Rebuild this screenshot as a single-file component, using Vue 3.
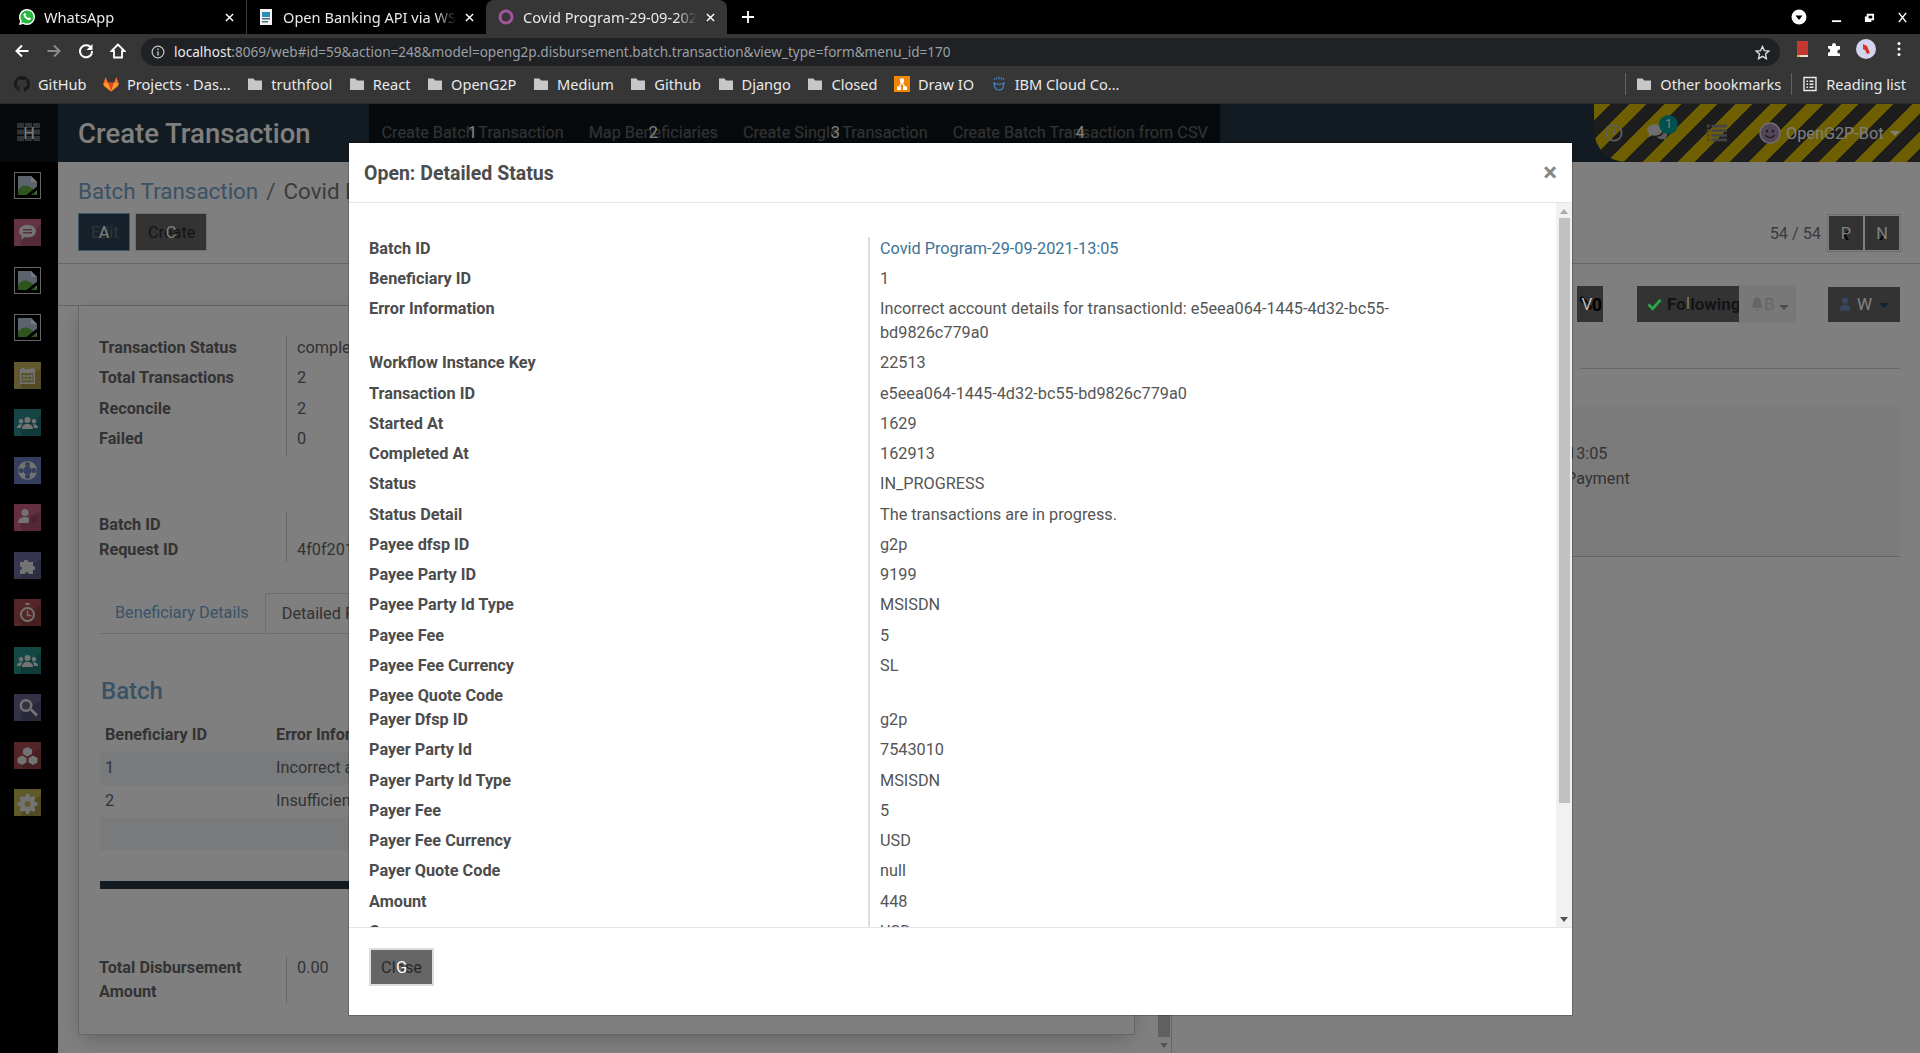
<script setup>
const url = ':8069/web#id=59&action=248&model=openg2p.disbursement.batch.transaction&view_type=form&menu_id=170'

const tabs = [
  { title: 'WhatsApp', kind: 'wa' },
  { title: 'Open Banking API via WSO2', kind: 'doc' },
  { title: 'Covid Program-29-09-2021-13:05', kind: 'ring', active: true },
]

const bookmarks = [
  { label: 'GitHub', kind: 'github' },
  { label: 'Projects · Das...', kind: 'gitlab' },
  { label: 'truthfool', kind: 'folder' },
  { label: 'React', kind: 'folder' },
  { label: 'OpenG2P', kind: 'folder' },
  { label: 'Medium', kind: 'folder' },
  { label: 'Github', kind: 'folder' },
  { label: 'Django', kind: 'folder' },
  { label: 'Closed', kind: 'folder' },
  { label: 'Draw IO', kind: 'draw' },
  { label: 'IBM Cloud Co...', kind: 'ibm' },
]

const navLinks = [
  { label: 'Create Batch Transaction', key: '1' },
  { label: 'Map Beneficiaries', key: '2' },
  { label: 'Create Single Transaction', key: '3' },
  { label: 'Create Batch Transaction from CSV', key: '4' },
]

const shade = ['M27 6 27 27 8 27 6 20z', 'rgba(0,0,0,.16)']
const light = '#e6e6e6'
const apps = [
  { broken: true },
  { bg: '#c9668c', paths: [shade, ['M13.5 6c5 0 8.5 2.700 8.500 6.200s-3.500 6.200-8.500 6.200c-1 0-1.800-.1-2.600-.3L7 21l1-4C6 15.800 5 14.200 5 12.200 5 8.700 8.500 6 13.500 6z', light], ['M9 10h9v1.400H9zM9 13h9v1.400H9z', '#b85a80']] },
  { broken: true },
  { broken: true },
  { bg: '#c4b45c', paths: [shade, ['M6 7h15v15H6z', light], ['M8 6h2v3H8zM17 6h2v3h-2z', light], ['M7.500 11h12v9.500h-12z', '#b4a650'], ['M9 13h2.500v2H9zM12.500 13H15v2h-2.500zM16 13h2.500v2H16zM9 16.500h2.500v2H9zM12.500 16.500H15v2h-2.500zM16 16.500h2.500v2H16z', light]] },
  { bg: '#2a8a88', paths: [shade, ['M13.500 8a3 3 0 1 1 0 6 3 3 0 0 1 0-6zM7 10a2.300 2.300 0 1 1 0 4.600A2.300 2.300 0 0 1 7 10zM20 10a2.300 2.300 0 1 1 0 4.600 2.300 2.300 0 0 1 0-4.600z', light], ['M8 20c0-3 2-5 5.500-5s5.500 2 5.500 5zM3 19c0-2.500 1.500-3.700 4-3.700.5 0 1 .1 1.300.2-.8 1-1.300 2.200-1.300 3.500zM24 19c0-2.500-1.500-3.700-4-3.700-.5 0-1 .1-1.300.2.800 1 1.300 2.200 1.300 3.500z', light]] },
  { bg: '#6a7cb8', paths: [['M13.500 4a9.500 9.500 0 1 1 0 19 9.500 9.500 0 0 1 0-19z', light], ['M13.500 9.500a4 4 0 1 1 0 8 4 4 0 0 1 0-8zM13.500 5a2.500 2.500 0 0 1 0 5 2.500 2.500 0 0 1 0-5zM13.500 17a2.500 2.500 0 0 1 0 5 2.500 2.500 0 0 1 0-5zM7 11a2.500 2.500 0 0 1 0 5 2.500 2.500 0 0 1 0-5zM20 11a2.500 2.500 0 0 1 0 5 2.500 2.500 0 0 1 0-5z', '#6a7cb8']] },
  { bg: '#c9607f', paths: [shade, ['M11 5a3.500 3.500 0 1 1 0 7 3.500 3.500 0 0 1 0-7zM4 19c0-4 3-6 7-6 1.500 0 2.800.3 3.800.8V19z', light], ['M16 11h8v9h-8z', '#c9607f'], ['M16.500 11.500h7.500v8h-7.500z', 'rgba(0,0,0,.25)']] },
  { bg: '#6c6ca0', paths: [shade, ['M6 10h4c-.6-3 4.600-3 4 0h5v4c3-.6 3 4.600 0 4v4h-4.500c.6-2.500-4-2.500-3.500 0H6v-4c2.500.6 2.500-4 0-3.500z', light]] },
  { bg: '#a84c50', paths: [shade, ['M13.500 8a7.500 7.500 0 1 1 0 15 7.500 7.500 0 0 1 0-15zM11.500 4h4v2h-4z', light], ['M13.500 10a5.500 5.500 0 1 1 0 11 5.500 5.500 0 0 1 0-11z', '#a84c50'], ['M12.800 11.500h1.400v4.300h3v1.400h-4.400z', light]] },
  { bg: '#269088', paths: [shade, ['M13.500 8a3 3 0 1 1 0 6 3 3 0 0 1 0-6zM7 10a2.300 2.300 0 1 1 0 4.600A2.300 2.300 0 0 1 7 10zM20 10a2.300 2.300 0 1 1 0 4.600 2.300 2.300 0 0 1 0-4.600z', light], ['M8 20c0-3 2-5 5.500-5s5.500 2 5.500 5zM3 19c0-2.500 1.500-3.700 4-3.700.5 0 1 .1 1.300.2-.8 1-1.300 2.200-1.300 3.500zM24 19c0-2.500-1.500-3.700-4-3.700-.5 0-1 .1-1.300.2.800 1 1.300 2.200 1.300 3.500z', light]] },
  { bg: '#66648e', paths: [shade, ['M12 5a6.500 6.500 0 1 1 0 13 6.500 6.500 0 0 1 0-13z', light], ['M12 7.500a4 4 0 1 1 0 8 4 4 0 0 1 0-8z', '#66648e'], ['M16 16.500l2-2 6 6-2 2z', light]] },
  { bg: '#a84a50', paths: [shade, ['M13.500 5l4.500 2.500v4.500L13.500 14.500 9 12V7.500zM8 13.500l4.500 2.500v4.500L8 23l-4.500-2.500V16zM19 13.500l4.500 2.500v4.500L19 23l-4.500-2.500V16z', light]] },
  { bg: '#c0b254', paths: [shade, ['M12 5h3l.5 2.400 1.800.8 2.100-1.300 2.100 2.100-1.300 2.100.8 1.800L23.500 13.500v3l-2.400.5-.8 1.800 1.300 2.100-2.100 2.100-2.100-1.300-1.800.8L15 25h-3l-.5-2.400-1.800-.8-2.100 1.300-2.100-2.100 1.300-2.100-.8-1.800L3.500 16.500v-3L6 13l.8-1.800-1.300-2.100 2.100-2.100 2.100 1.300 1.800-.8z', light], ['M13.500 12a3 3 0 1 1 0 6 3 3 0 0 1 0-6z', '#c0b254']] },
]

const summary = [
  ['Transaction Status', 'completed'],
  ['Total Transactions', '2'],
  ['Reconcile', '2'],
  ['Failed', '0'],
]

const rows = [
  ['Batch ID', 'Covid Program-29-09-2021-13:05', 'link'],
  ['Beneficiary ID', '1'],
  ['Error Information', 'Incorrect account details for transactionId: e5eea064-1445-4d32-bc55-bd9826c779a0'],
  ['Workflow Instance Key', '22513'],
  ['Transaction ID', 'e5eea064-1445-4d32-bc55-bd9826c779a0'],
  ['Started At', '1629'],
  ['Completed At', '162913'],
  ['Status', 'IN_PROGRESS'],
  ['Status Detail', 'The transactions are in progress.'],
  ['Payee dfsp ID', 'g2p'],
  ['Payee Party ID', '9199'],
  ['Payee Party Id Type', 'MSISDN'],
  ['Payee Fee', '5'],
  ['Payee Fee Currency', 'SL'],
  ['Payee Quote Code', ''],
  ['Payer Dfsp ID', 'g2p'],
  ['Payer Party Id', '7543010'],
  ['Payer Party Id Type', 'MSISDN'],
  ['Payer Fee', '5'],
  ['Payer Fee Currency', 'USD'],
  ['Payer Quote Code', 'null'],
  ['Amount', '448'],
  ['Currency', 'USD'],
]
</script>

<template>
  <div class="page">
    <!-- browser chrome -->
    <div class="tabstrip">
      <div v-for="tab in tabs" :key="tab.title" class="tab" :class="{ active: tab.active }">
        <svg v-if="tab.kind === 'wa'" class="fav" viewBox="0 0 16 16">
          <path d="M8 0a8 8 0 0 1 0 16c-1.400 0-2.700-.4-3.800-1L0 16l1.100-4A8 8 0 0 1 8 0z" fill="#fff" />
          <path d="M8 1.400a6.600 6.600 0 0 1 0 13.200c-1.300 0-2.400-.4-3.400-1l-2.500.7.700-2.400A6.600 6.600 0 0 1 8 1.400z" fill="#2ab540" />
          <path d="M5.800 4.200c.6-.3.800.2 1.100 1 .2.500.1.700-.3 1.200.5 1.100 1.400 2 2.700 2.600.4-.5.700-.8 1.100-.6 1.500.7 1.700.7 1.500 1.400-.3 1-1.600 1.500-2.700 1.100C7 10.200 5.300 8.500 4.600 6.400c-.3-1 .3-1.900 1.200-2.200z" fill="#fff" />
        </svg>
        <svg v-else-if="tab.kind === 'doc'" class="fav" viewBox="0 0 16 16">
          <path d="M2 0h12v16H2z" fill="#f2f2f2" />
          <path d="M4 3h8v5H4z" fill="#2b8fb8" />
          <path d="M4 9h8v1.500H4zM4 12h6v1.500H4z" fill="#4a6a80" />
        </svg>
        <svg v-else class="fav" viewBox="0 0 16 16">
          <circle cx="8" cy="8" r="6" fill="none" stroke="#a0559c" stroke-width="3" />
        </svg>
        <span class="tab-title">{{ tab.title }}</span>
        <svg class="tab-close" viewBox="0 0 10 10"><path d="M1 1l8 8M9 1l-8 8" stroke="#fff" stroke-width="1.600" /></svg>
      </div>
      <svg class="new-tab" viewBox="0 0 12 12"><path d="M6 0v12M0 6h12" stroke="#fff" stroke-width="1.800" /></svg>
      <div class="win-ctrl">
        <svg class="win-down" viewBox="0 0 16 16"><circle cx="8" cy="8" r="7.500" fill="#fff" /><path d="M4.500 6.500h7L8 11z" fill="#000" /></svg>
        <svg class="win-btn" viewBox="0 0 12 12"><path d="M1 10h10" stroke="#fff" stroke-width="2" /></svg>
        <svg class="win-btn" viewBox="0 0 12 12"><path d="M3 2h8v7H8v2H1V5h2z" fill="#fff" /><path d="M5 4h4v3H5z" fill="#000" /></svg>
        <svg class="win-btn" viewBox="0 0 12 12"><path d="M2 1l8 10M10 1L2 11" stroke="#fff" stroke-width="1.600" /></svg>
      </div>
    </div>

    <div class="toolbar">
      <svg class="tool" viewBox="0 0 16 16"><path d="M14.500 8H2.500M8 2.500L2.500 8 8 13.500" fill="none" stroke="#fff" stroke-width="2" /></svg>
      <svg class="tool" viewBox="0 0 16 16"><path d="M1.500 8h12M8 2.500L13.500 8 8 13.500" fill="none" stroke="#8a8b8d" stroke-width="2" /></svg>
      <svg class="tool" viewBox="0 0 16 16"><path d="M13.300 5.500A6 6 0 1 0 14 8" fill="none" stroke="#fff" stroke-width="2" /><path d="M14.500 1v6h-6z" fill="#fff" /></svg>
      <svg class="tool" viewBox="0 0 16 16"><path d="M8 1.500L1.500 8H4v6.500h8V8h2.500z" fill="none" stroke="#fff" stroke-width="1.800" /></svg>
      <div class="address">
        <svg class="info" viewBox="0 0 16 16"><circle cx="8" cy="8" r="6.700" fill="none" stroke="#c4c5c7" stroke-width="1.400" /><path d="M7.200 7h1.600v5H7.200zM7.200 4h1.600v1.700H7.200z" fill="#c4c5c7" /></svg>
        <span class="host">localhost</span><span class="path">{{ url }}</span>
        <svg class="star" viewBox="0 0 16 16"><path d="M8 1.500l2 4.500 4.800.5-3.600 3.200 1 4.800L8 12.100 3.800 14.500l1-4.800L1.200 6.500 6 6z" fill="none" stroke="#dfe1e4" stroke-width="1.400" /></svg>
      </div>
      <div class="extensions">
        <svg class="ext" viewBox="0 0 16 16"><path d="M3 0h11v14H3z" fill="#c5382e" /><path d="M3 14h11v2H3z" fill="#e8e0d0" /><path d="M3 14h3v2H3z" fill="#e2b52c" /></svg>
        <svg class="ext" viewBox="0 0 16 16"><path d="M2 5h4c-.5-4 4.500-4 4 0h4v3.500c-3.500-.5-3.500 4.500 0 4V15H2v-3.500c3 .5 3-4.500 0-4z" fill="#fff" /></svg>
        <svg class="ext" viewBox="0 0 20 20"><circle cx="10" cy="10" r="10" fill="#d3d5ef" /><path d="M7 5l4 2 3 7-3 1-2-4-2-1z" fill="#d8322a" /></svg>
        <svg class="ext dots" viewBox="0 0 4 16"><circle cx="2" cy="2.500" r="1.500" fill="#fff" /><circle cx="2" cy="8" r="1.500" fill="#fff" /><circle cx="2" cy="13.500" r="1.500" fill="#fff" /></svg>
      </div>
    </div>

    <div class="bookmarks">
      <div v-for="b in bookmarks" :key="b.label" class="bm">
        <svg v-if="b.kind === 'folder'" class="bm-icon" viewBox="0 0 16 16"><path d="M1 2.500h5.500l1.500 2h7V14H1z" fill="#c6c7c9" /></svg>
        <svg v-else-if="b.kind === 'github'" class="bm-icon" viewBox="0 0 16 16">
          <path d="M8 0a8 8 0 0 0-2.500 15.600c.4 0 .5-.2.5-.4v-1.400c-2.200.5-2.700-1-2.700-1-.4-.9-.9-1.200-.9-1.200-.7-.5.100-.5.100-.5.800.100 1.200.8 1.200.8.700 1.200 1.900.9 2.300.7 0-.5.300-.9.500-1.100-1.800-.2-3.600-.9-3.600-4 0-.9.300-1.600.8-2.100 0-.2-.3-1 .1-2.100 0 0 .7-.2 2.200.8a7.600 7.600 0 0 1 4 0c1.500-1 2.200-.8 2.200-.8.400 1.100.2 1.900.1 2.100.5.500.8 1.200.8 2.100 0 3.100-1.900 3.800-3.600 4 .3.300.5.700.5 1.500v2.200c0 .2.100.4.500.4A8 8 0 0 0 8 0z" fill="#17191c" />
        </svg>
        <svg v-else-if="b.kind === 'gitlab'" class="bm-icon" viewBox="0 0 16 16">
          <path d="M8 15.500L1 10.300.2 7.800 2.700 1l2.200 5.800h6.200L13.300 1l2.500 6.800-.8 2.500z" fill="#fc6d26" />
          <path d="M8 15.500L4.900 6.800h6.200z" fill="#e24329" />
          <path d="M8 15.500L.2 7.800l4.700-1zM8 15.500l7.800-7.700-4.700-1z" fill="#fca326" />
        </svg>
        <svg v-else-if="b.kind === 'draw'" class="bm-icon" viewBox="0 0 16 16">
          <path d="M0 0h16v16H0z" fill="#f08705" />
          <path d="M6 2.500h4v4H8.800l2.400 4H13v3.500H9v-3.500h.8L8 7.500l-1.800 3H7V14H3v-3.500h1.800l2.400-4H6z" fill="#fff" />
        </svg>
        <svg v-else class="bm-icon" viewBox="0 0 16 16">
          <path d="M3 7c.5 4 1 7 5 7s4.500-3 5-7c-3 1.500-7 1.500-10 0z" fill="none" stroke="#3c8ed6" stroke-width="1.200" />
          <path d="M3 2l1 2M8 .5v3M13 2l-1 2M5.500 1l.5 2.500M10.500 1L10 3.500" stroke="#3c8ed6" stroke-width="1" />
        </svg>
        <span>{{ b.label }}</span>
      </div>
      <div class="bm-right">
        <div class="bm-sep"></div>
        <div class="bm">
          <svg class="bm-icon" viewBox="0 0 16 16"><path d="M1 2.500h5.500l1.500 2h7V14H1z" fill="#c6c7c9" /></svg>
          <span>Other bookmarks</span>
        </div>
        <div class="bm-sep"></div>
        <div class="bm">
          <svg class="bm-icon" viewBox="0 0 16 16"><path d="M2 1.500h12v13H2z" fill="none" stroke="#e8eaed" stroke-width="1.400" /><path d="M4.500 4.500h1.500V6H4.500zM7.500 4.500h4V6h-4zM4.500 7.500h1.500V9H4.500zM7.500 7.500h4V9h-4zM4.500 10.500h1.500V12H4.500zM7.500 10.500h4V12h-4z" fill="#e8eaed" /></svg>
          <span>Reading list</span>
        </div>
      </div>
    </div>

    <!-- odoo app, dimmed by the modal backdrop -->
    <div class="app">
      <header class="nav">
        <div class="brand">
          <svg class="brand-grid" viewBox="0 0 23 18">
            <path d="M0 0h7v5H0zM8 0h7v5H8zM16 0h7v5h-7zM0 6.500h7v5H0zM8 6.500h7v5H8zM16 6.500h7v5h-7zM0 13h7v5H0zM8 13h7v5H8zM16 13h7v5h-7z" fill="#fff" />
          </svg>
          <span class="hk">H</span>
        </div>
        <div class="nav-title">Create Transaction</div>
        <nav class="nav-links">
          <a v-for="l in navLinks" :key="l.key" class="nav-link">{{ l.label }}<span class="hk">{{ l.key }}</span></a>
        </nav>
        <div class="ribbon">
          <svg class="rb-clock" viewBox="0 0 20 20"><circle cx="10" cy="10" r="8.500" fill="none" stroke="#bbb" stroke-width="2" /><path d="M10 5v5.500H7" fill="none" stroke="#bbb" stroke-width="2" /></svg>
          <div class="rb-chat">
            <svg viewBox="0 0 20 18"><path d="M8 1c4 0 7 2.300 7 5.300S12 11.500 8 11.500c-1 0-1.800-.1-2.600-.4L2 13l1-3C1.800 9 1 7.700 1 6.300 1 3.300 4 1 8 1z" fill="#ddd" /><path d="M16 7c2 .6 3.500 2 3.500 3.700 0 1.200-.7 2.200-1.700 3l.7 2.300-2.700-1.500c-2.300.5-5-.3-6-2 4 0 6.500-2.500 6.200-5.500z" fill="#bbb" /></svg>
            <span class="badge">1</span>
          </div>
          <svg class="rb-list" viewBox="0 0 22 20"><path d="M0 1h3v3H0zM5 1h17v3H5zM0 6h3v3H0zM5 6h17v3H5zM0 11h3v3H0zM5 11h17v3H5zM0 16h3v3H0zM5 16h17v3H5z" fill="#8a8a8a" /></svg>
          <div class="rb-user">
            <svg viewBox="0 0 22 22"><circle cx="11" cy="11" r="10" fill="#a78cb0" stroke="#ddd" stroke-width="1.500" /><circle cx="8" cy="9" r="1.200" fill="#333" /><circle cx="14" cy="9" r="1.200" fill="#333" /><path d="M6.500 13c2 3.500 7 3.500 9 0" fill="none" stroke="#333" stroke-width="1.200" /></svg>
            <span>OpenG2P-Bot</span>
            <i class="caret"></i>
          </div>
        </div>
      </header>

      <div class="app-body">
        <aside class="sidebar">
          <div v-for="(app, i) in apps" :key="i" class="app-icon" :class="{ broken: app.broken }" :style="app.bg ? { background: app.bg } : null">
            <svg v-if="app.broken" viewBox="0 0 25 25">
              <path d="M3 3h13l6 6v13H3z" fill="#b7c6d8" />
              <path d="M16 3l6 6h-6z" fill="#eef2f6" />
              <path d="M3 22v-5c4-6 10-6 16 0l3 5z" fill="#5faa3c" />
              <path d="M9 24L24 12v4L13 24z" fill="#000" />
            </svg>
            <svg v-else viewBox="0 0 27 27">
              <path v-for="(p, j) in app.paths" :key="j" :d="p[0]" :fill="p[1]" />
            </svg>
          </div>
        </aside>

        <main class="main">
          <div class="control-panel">
            <div class="cp-left">
              <div class="crumbs"><a>Batch Transaction</a><span class="crumb-sep">/</span><span>Covid Program-29-09-2021-13:05</span></div>
              <div class="cp-btns">
                <button class="btn primary">Edit<span class="hk">A</span></button>
                <button class="btn">Create<span class="hk">C</span></button>
              </div>
            </div>
            <div class="pager">
              <span>54 / 54</span>
              <div class="pager-btns">
                <button class="btn small">‹<span class="hk">P</span></button>
                <button class="btn small">›<span class="hk">N</span></button>
              </div>
            </div>
          </div>

          <div class="content">
            <div class="form-col">
              <div class="form-scroll">
                <div class="statusbar"></div>
                <div class="sheet">
                  <div class="group first">
                    <div v-for="s in summary" :key="s[0]" class="g-row">
                      <div class="g-label">{{ s[0] }}</div>
                      <div class="g-val">{{ s[1] }}</div>
                    </div>
                  </div>
                  <div class="group second">
                    <div class="g-row tight"><div class="g-label">Batch ID</div><div class="g-val"></div></div>
                    <div class="g-row tight"><div class="g-label">Request ID</div><div class="g-val">4f0f201a-8b21-4c7e</div></div>
                  </div>
                  <div class="sheet-tabs">
                    <a class="s-tab">Beneficiary Details</a>
                    <a class="s-tab on">Detailed Failures</a>
                  </div>
                  <h2 class="batch">Batch</h2>
                  <div class="b-head"><span>Beneficiary ID</span><span>Error Information</span></div>
                  <div class="b-row odd"><span>1</span><span>Incorrect account details</span></div>
                  <div class="b-row"><span>2</span><span>Insufficient funds</span></div>
                  <div class="b-row odd"></div>
                  <div class="progress"></div>
                  <div class="group third">
                    <div class="g-row">
                      <div class="g-label">Total Disbursement Amount</div>
                      <div class="g-val">0.00</div>
                    </div>
                  </div>
                </div>
              </div>
              <div class="form-bar">
                <div class="form-thumb"></div>
                <i class="arrow-down dim"></i>
              </div>
            </div>

            <aside class="chatter">
              <div class="followers">
                <button class="btn attach">
                  <svg class="clip" viewBox="0 0 16 16"><path d="M3 4l8 9c2 2 4-.5 2.500-2L6 3C4.500 1.500 2.500 3.500 4 5l6 7" fill="none" stroke="#111" stroke-width="1.800" /></svg>
                  0<span class="hk">V</span>
                </button>
                <div class="follow-group">
                  <button class="btn following">
                    <svg class="check" viewBox="0 0 16 14"><path d="M1.500 7l4.500 4.500L14.500 2" fill="none" stroke="#28a745" stroke-width="3" /></svg>
                    <b>Following</b><span class="hk">I</span>
                  </button>
                  <button class="btn bell">
                    <svg class="bell-icon" viewBox="0 0 14 16"><path d="M7 0c3 0 4.500 2.500 4.500 5.500 0 3 1 4.500 2.500 6v1H0v-1c1.500-1.500 2.500-3 2.500-6C2.500 2.500 4 0 7 0zM5 14h4a2 2 0 0 1-4 0z" fill="#666" /></svg>
                    <span>B</span><i class="caret small"></i>
                  </button>
                </div>
                <button class="btn watch">
                  <svg class="person" viewBox="0 0 14 16"><circle cx="7" cy="4" r="3.600" fill="#38485c" /><path d="M1 16c-.5-4 1-7 6-7s6.500 3 6 7z" fill="#38485c" /></svg>
                  <span class="hk hk-none">W</span><i class="caret dark"></i>
                </button>
              </div>
              <div class="chat-line"></div>
              <div class="chat-box">
                <div>Covid Program-29-09-2021-13:05</div>
                <div class="chat-pay">Payment</div>
              </div>
            </aside>
          </div>
        </main>
      </div>

      <div class="backdrop"></div>

      <section class="modal">
        <div class="modal-head">
          <h4>Open: Detailed Status</h4>
          <span class="modal-x">×</span>
        </div>
        <div class="modal-body">
          <div class="modal-scroll">
            <div v-for="r in rows" :key="r[0]" class="m-row">
              <div class="m-label">{{ r[0] }}</div>
              <div class="m-val" :class="{ link: r[2], empty: !r[1] }"><span>{{ r[1] }}</span></div>
            </div>
          </div>
          <div class="modal-bar">
            <i class="arrow-up"></i>
            <div class="modal-thumb"></div>
            <i class="arrow-down"></i>
          </div>
        </div>
        <div class="modal-foot">
          <button class="btn close">Close<span class="hk">G</span></button>
        </div>
      </section>
    </div>
  </div>
</template>

<style>
html, body {
  margin: 0;
  overflow: hidden;
  background: #000;
}
</style>

<style scoped>
.page {
  width: 1920px;
  height: 1053px;
  overflow: hidden;
  font-family: Roboto, "Liberation Sans", sans-serif;
  display: flex;
  flex-direction: column;
}

/* browser chrome */
.tabstrip {
  height: 34px;
  background: #000;
  display: flex;
  align-items: center;
  padding-left: 8px;
  color: #e8eaed;
  font-family: "Noto Sans", sans-serif;
  font-size: 14.600px;
}
.tab {
  width: 239px;
  height: 34px;
  box-sizing: border-box;
  padding: 0 11px;
  display: flex;
  align-items: center;
  gap: 9px;
  border-right: 1px solid #3c3c3c;
}
.tab.active {
  width: 241px;
  background: #363636;
  border: 0;
  border-radius: 8px 8px 0 0;
  padding-left: 12px;
}
.tab:nth-child(2) {
  border-right: 0;
}
.fav {
  width: 16px;
  height: 16px;
  flex: none;
}
.tab-title {
  flex: 1;
  overflow: hidden;
  white-space: nowrap;
  mask-image: linear-gradient(to right, #000 88%, transparent);
}
.tab-close {
  width: 9px;
  height: 9px;
  flex: none;
  margin-right: 1px;
}
.new-tab {
  width: 12px;
  height: 12px;
  margin-left: 15px;
}
.win-ctrl {
  margin-left: auto;
  display: flex;
  align-items: center;
  padding-right: 12px;
  gap: 22px;
}
.win-down {
  width: 16px;
  height: 16px;
  margin-right: 2px;
}
.win-btn {
  width: 11px;
  height: 11px;
}

.toolbar {
  height: 32px;
  background: #363636;
  display: flex;
  align-items: flex-start;
  padding-left: 14px;
}
.tool {
  width: 16px;
  height: 16px;
  margin: 9px 16px 0 0;
  flex: none;
}
.address {
  margin: 4px 0 0 -1px;
  width: 1639px;
  height: 28px;
  box-sizing: border-box;
  padding: 0 10px;
  background: #202124;
  border-radius: 14px;
  display: flex;
  align-items: center;
  font-family: "Noto Sans", sans-serif;
  font-size: 13.570px;
  white-space: nowrap;
}
.info {
  width: 14px;
  height: 14px;
  margin-right: 9px;
  flex: none;
}
.host {
  color: #e8eaed;
  margin-top: -2px;
}
.path {
  color: #9aa0a6;
  margin-top: -2px;
}
.star {
  margin-left: auto;
  width: 15px;
  height: 15px;
}
.extensions {
  display: flex;
  align-items: center;
  margin: 5px 0 0 14px;
  gap: 16px;
}
.ext {
  width: 16px;
  height: 16px;
}
.ext:nth-child(3) {
  width: 20px;
  height: 20px;
  margin: 0 0 0 -2px;
}
.ext.dots {
  width: 4px;
  margin-left: 5px;
}

.bookmarks {
  height: 35px;
  padding-bottom: 2px;
  background: #363636;
  border-bottom: 1px solid #2a2a2a;
  box-sizing: content-box;
  display: flex;
  align-items: center;
  gap: 16.500px;
  padding-left: 14px;
  color: #e8eaed;
  font-family: "Noto Sans", sans-serif;
  font-size: 14.600px;
  white-space: nowrap;
}
.bm {
  display: flex;
  align-items: center;
  gap: 8px;
}
.bm-icon {
  width: 16px;
  height: 16px;
}
.bm-right {
  margin-left: auto;
  display: flex;
  align-items: center;
  gap: 10px;
  padding-right: 14px;
}
.bm-sep {
  width: 1px;
  height: 22px;
  background: #5f6368;
}

/* odoo app */
.app {
  position: relative;
  flex: 1;
  min-height: 0;
  display: flex;
  flex-direction: column;
  background: #fff;
}
.backdrop {
  position: absolute;
  inset: 0;
  background: rgba(0, 0, 0, .5);
}
.hk {
  position: absolute;
  inset: 0;
  display: flex;
  align-items: center;
  justify-content: center;
  background: rgba(0, 0, 0, .6);
  color: #fff;
  font-family: Roboto, sans-serif;
  font-weight: 400;
  font-size: 16.250px;
}

.nav {
  height: 58px;
  flex: none;
  background: #243642;
  display: flex;
  align-items: stretch;
  color: #fff;
}
.brand {
  position: relative;
  width: 58px;
  background: #243642;
  flex: none;
}
.brand-grid {
  position: absolute;
  left: 17px;
  top: 19px;
  width: 23px;
  height: 18px;
}
.nav-title {
  width: 291px;
  padding-left: 20px;
  font-size: 27.500px;
  font-weight: 500;
  line-height: 60px;
  white-space: nowrap;
}
.nav-links {
  display: flex;
  height: 58px;
  flex: none;
}
.nav-link {
  position: relative;
  padding: 0 12.500px;
  font-size: 16.250px;
  line-height: 58px;
  white-space: nowrap;
}
.nav-link:last-child {
  padding-right: 12px;
}
.ribbon {
  margin-left: auto;
  width: 326px;
  box-sizing: border-box;
  border-bottom-left-radius: 32px;
  background: repeating-linear-gradient(135deg, #dcbe00 0, #dcbe00 12px, #3a3a3a 12px, #3a3a3a 25px);
  position: relative;
  display: flex;
  align-items: center;
  padding-left: 11px;
}
.rb-clock {
  width: 18px;
  height: 18px;
}
.rb-chat {
  position: relative;
  margin-left: 23px;
  width: 22px;
  height: 20px;
}
.rb-chat svg {
  width: 22px;
  height: 20px;
}
.badge {
  position: absolute;
  left: 13px;
  top: -8px;
  width: 19px;
  height: 19px;
  border-radius: 50%;
  background: #00a09d;
  font-size: 12px;
  line-height: 19px;
  text-align: center;
}
.rb-list {
  width: 20px;
  height: 20px;
  margin-left: 39px;
}
.rb-user {
  display: flex;
  align-items: center;
  margin-left: 32px;
  font-size: 16.250px;
  color: #fff;
  gap: 5px;
}
.rb-user svg {
  width: 22px;
  height: 22px;
}
.caret {
  display: inline-block;
  width: 0;
  height: 0;
  border: 5px solid transparent;
  border-top-color: #fff;
  border-bottom: 0;
  margin-left: 1px;
}
.caret.small {
  margin-left: 4px;
  border-top-color: #999;
}
.caret.dark {
  border-top-color: #123;
  position: relative;
  margin-left: 0;
}

.app-body {
  flex: 1;
  min-height: 0;
  display: flex;
}
.sidebar {
  width: 58px;
  flex: none;
  background: #000;
  display: flex;
  flex-direction: column;
  align-items: center;
  gap: 20.500px;
  padding-top: 9.500px;
  box-sizing: border-box;
}
.app-icon {
  width: 27px;
  height: 27px;
  flex: none;
  margin-right: 3px;
}
.app-icon svg {
  display: block;
  width: 100%;
  height: 100%;
}
.app-icon.broken {
  box-sizing: border-box;
  border: 1px solid #ccc;
  background: #000;
}

.main {
  flex: 1;
  min-width: 0;
  display: flex;
  flex-direction: column;
  color: #888;
}
.control-panel {
  height: 102px;
  flex: none;
  box-sizing: border-box;
  border-bottom: 1px solid #ccc;
  display: flex;
  justify-content: space-between;
  padding: 0 19px 0 20px;
}
.crumbs {
  margin-top: 15px;
  font-size: 22.400px;
  line-height: 28px;
  color: #777;
  white-space: nowrap;
}
.crumbs a {
  color: #74a4cc;
}
.crumb-sep {
  margin: 0 8px;
  color: #888;
}
.cp-btns {
  display: flex;
  gap: 5px;
  margin-top: 8px;
}
.btn {
  position: relative;
  padding: 0 12px;
  height: 38px;
  box-sizing: border-box;
  background: #fff;
  border: 1px solid #ddd;
  font-family: Roboto, sans-serif;
  font-size: 16.250px;
  color: #666;
  flex: none;
}
.btn.primary {
  width: 52px;
  background: #6ea9d6;
  border-color: #76aed6;
  color: #fff;
}
.cp-btns .btn:nth-child(2) {
  width: 72px;
}
.pager {
  display: flex;
  align-items: center;
  gap: 6px;
  height: 38px;
  margin-top: 52px;
  font-size: 16.250px;
  color: #777;
}
.pager-btns {
  display: flex;
  gap: 0;
  border: 1px solid #ddd;
}
.btn.small {
  width: 36px;
  height: 36px;
  padding: 0;
  border: 1px solid #fff;
  color: #000;
  font-size: 22px;
  font-weight: 700;
}

.content {
  flex: 1;
  min-height: 0;
  display: flex;
}
.form-col {
  width: 1114px;
  flex: none;
  display: flex;
  border-right: 1px solid #ccc;
  box-sizing: border-box;
}
.form-scroll {
  flex: 1;
  min-width: 0;
  padding-left: 20px;
  padding-right: 21px;
}
.statusbar {
  height: 42px;
  margin-left: -20px;
  margin-right: -21px;
  border-bottom: 1px solid #ccc;
  box-sizing: border-box;
}
.sheet {
  height: 729px;
  box-sizing: border-box;
  border: 1px solid #ccc;
  border-top: 0;
  padding: 30px 20px 0;
  box-shadow: 0 5px 20px -5px rgba(0, 0, 0, .3);
  font-size: 16.250px;
  color: #666;
}
.group.second {
  margin-top: 55px;
}
.group.third {
  margin-top: 67px;
}
.g-row {
  display: flex;
  line-height: 24px;
  white-space: nowrap;
}
.g-row.tight {
  line-height: 25px;
}
.group.first .g-row {
  height: 30.300px;
}
.g-label {
  width: 187px;
  flex: none;
  font-weight: 700;
  color: #666;
  white-space: normal;
}
.g-val {
  flex: 1;
  border-left: 1px solid #ccc;
  padding-left: 10px;
}
.sheet-tabs {
  display: flex;
  margin-top: 31px;
  border-bottom: 1px solid #ddd;
  height: 40px;
}
.s-tab {
  padding: 0 16px;
  line-height: 40px;
  color: #74a4cc;
  box-sizing: border-box;
}
.s-tab.on {
  color: #666;
  border: 1px solid #ddd;
  border-bottom: 0;
}
.batch {
  margin: 42px 0 0 2px;
  font-size: 24px;
  line-height: 30px;
  font-weight: 500;
  color: #74a4cc;
}
.b-head,
.b-row {
  display: flex;
  margin-left: 1px;
  padding-left: 5px;
  white-space: nowrap;
}
.b-head {
  margin-top: 17px;
  line-height: 24px;
  font-weight: 700;
  color: #666;
  height: 29px;
}
.b-row {
  height: 32.500px;
  line-height: 32px;
}
.b-row.odd {
  background: #f3f4f6;
}
.b-head span:first-child,
.b-row span:first-child {
  width: 171px;
}
.progress {
  height: 8px;
  margin: 31.500px 0 0 1px;
  background: #243642;
}
.form-bar {
  position: relative;
  width: 16px;
  flex: none;
  margin-right: -1px;
}
.form-thumb {
  position: absolute;
  left: 2px;
  right: 2px;
  top: 42px;
  bottom: 16px;
  background: #c1c1c1;
}
.arrow-down,
.arrow-up {
  display: block;
  width: 0;
  height: 0;
  border: 4px solid transparent;
}
.arrow-down {
  border-top: 5px solid #505050;
  border-bottom: 0;
}
.arrow-up {
  border-bottom: 5px solid #a8a8a8;
  border-top: 0;
}
.arrow-down.dim {
  position: absolute;
  left: 4px;
  bottom: 5px;
  border-top-color: #aaa;
}

.chatter {
  flex: 1;
  min-width: 0;
  padding-right: 20px;
  box-sizing: border-box;
  font-size: 16.250px;
  color: #666;
}
.followers {
  height: 36px;
  margin-top: 22px;
  display: flex;
  justify-content: flex-end;
  align-items: center;
}
.attach {
  width: 26px;
  padding: 0 1px 0 0;
  height: 36px;
  margin-right: 34px;
  border: 0;
  font-size: 18px;
  font-weight: 700;
  color: #000;
  text-align: right;
}
.clip {
  position: absolute;
  left: 0;
  top: 9px;
  width: 16px;
  height: 16px;
  z-index: 1;
}
.attach .hk {
  z-index: 2;
  font-size: 17px;
  padding-right: 6px;
  box-sizing: border-box;
  background: rgba(0, 0, 0, .6);
  color: #bbb;
}
.follow-group {
  display: flex;
  margin-right: 32px;
}
.following {
  width: 102px;
  height: 36px;
  padding: 0;
  border: 0;
  font-size: 17px;
  color: #666;
  white-space: nowrap;
  text-align: left;
  padding-left: 10px;
}
.check {
  width: 15px;
  height: 13px;
  margin-right: 5px;
  position: relative;
  z-index: 1;
  vertical-align: -1px;
}
.bell {
  width: 57px;
  height: 38px;
  margin-top: -1px;
  padding: 0 0 0 12px;
  border: 0;
  background: #f0f0f0;
  color: #ccc;
  text-align: left;
  font-size: 17px;
  white-space: nowrap;
}
.bell-icon {
  width: 12px;
  height: 14px;
  margin-right: 1px;
  vertical-align: -1px;
}
.bell .bell-icon path {
  fill: #ccc;
}
.watch {
  width: 72px;
  height: 35px;
  padding: 0;
  border: 0;
}
.watch .hk-none {
  justify-content: flex-start;
  padding-left: 29px;
  font-size: 17px;
}
.person {
  position: absolute;
  left: 11px;
  top: 10px;
  width: 12px;
  height: 14px;
  z-index: 1;
}
.watch .caret {
  position: absolute;
  right: 11px;
  top: 16px;
  z-index: 1;
}
.chat-line {
  margin: 46px 0 0 408px;
  border-top: 1px solid #ccc;
  height: 0;
}
.chat-box {
  margin-top: 38px;
  height: 150px;
  box-sizing: border-box;
  border-bottom: 1px solid #ccc;
  background: #f6f6f6;
  padding: 35px 0 0 197px;
  line-height: 24.500px;
  white-space: nowrap;
}
.chat-pay {
  margin-left: 197px;
}

/* modal */
.modal {
  position: absolute;
  left: 349px;
  top: 39px;
  width: 1223px;
  height: 872px;
  background: #fff;
  display: flex;
  flex-direction: column;
  box-shadow: 0 0 0 1px rgba(0, 0, 0, .2);
  color: #4c4c4c;
  font-size: 16.250px;
}
.modal-head {
  height: 60px;
  flex: none;
  box-sizing: border-box;
  border-bottom: 1px solid #e5e5e5;
  display: flex;
  align-items: center;
  justify-content: space-between;
  padding: 1px 15px 0 15px;
}
.modal-head h4 {
  margin: 0;
  font-size: 19.500px;
  font-weight: 700;
  color: #4c4c4c;
}
.modal-x {
  font-size: 26px;
  font-weight: 700;
  color: #888;
  line-height: 1;
  margin-top: -3px;
}
.modal-body {
  flex: 1;
  min-height: 0;
  display: flex;
  border-bottom: 1px solid #e5e5e5;
}
.modal-scroll {
  flex: 1;
  min-width: 0;
  overflow: hidden;
  padding: 33.500px 0 0 20px;
}
.m-row {
  display: flex;
  line-height: 24px;
}
.m-label {
  width: 499px;
  flex: none;
  font-weight: 700;
}
.m-val {
  flex: none;
  width: 540px;
  box-sizing: border-box;
  border-left: 2px solid #ddd;
  padding: 0 0 6.250px 10px;
  color: #555;
}
.m-val.empty {
  padding-bottom: 0;
}
.m-val.link {
  color: #3c7396;
}
.modal-bar {
  width: 16px;
  flex: none;
  background: #f1f1f1;
  display: flex;
  flex-direction: column;
  align-items: center;
  position: relative;
}
.modal-bar .arrow-up {
  margin-top: 6px;
}
.modal-thumb {
  margin-top: 4px;
  width: 11px;
  height: 585px;
  background: #c1c1c1;
}
.modal-bar .arrow-down {
  position: absolute;
  bottom: 5px;
  left: 4px;
}
.modal-foot {
  height: 87px;
  flex: none;
  padding: 20px 0 0 20px;
  box-sizing: border-box;
}
.btn.close {
  width: 65px;
  padding: 0;
  border: 2px solid #ddd;
}
</style>
